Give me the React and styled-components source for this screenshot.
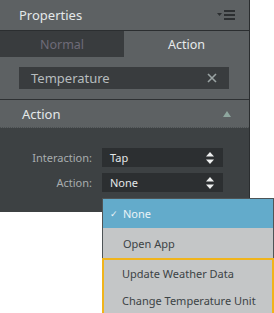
import React from "react";
import styled, { createGlobalStyle } from "styled-components";

const Global = createGlobalStyle`
  html, body { margin: 0; padding: 0; background: #ffffff; }
  body { font-family: "Noto Sans", "Open Sans", sans-serif; }
`;

const Stage = styled.div`
  position: relative;
  width: 274px;
  height: 313px;
  overflow: hidden;
  background: #ffffff;
`;

const Panel = styled.div`
  width: 249px;
  border-right: 1px solid #2a2d2f;
  display: flex;
  flex-direction: column;
  background: #5d6163;
`;

const Header = styled.div`
  height: 30px;
  border-bottom: 1px solid #2b2e30;
  display: flex;
  align-items: center;
  justify-content: space-between;
  padding: 0 12px 0 19px;
  color: #e4e8e9;
  font-size: 13px;
`;

const Tabs = styled.div`
  display: grid;
  grid-template-columns: 124px 1fr;
  height: 26px;
`;

const Tab = styled.div`
  display: flex;
  align-items: center;
  justify-content: center;
  font-size: 12.5px;
  background: ${(p) => (p.$active ? "#5d6163" : "#393c3e")};
  color: ${(p) => (p.$active ? "#e8ebec" : "#6e6b78")};
`;

const SearchArea = styled.div`
  padding: 10px 20px 10px 19px;
  border-bottom: 1px solid #2e3133;
`;

const SearchField = styled.div`
  height: 22px;
  background: #393c3e;
  display: flex;
  align-items: center;
  justify-content: space-between;
  padding: 0 12px 0 12px;
  color: #b7bcbe;
  font-size: 13px;
`;

const SectionHeader = styled.div`
  height: 27px;
  display: flex;
  align-items: center;
  justify-content: space-between;
  padding: 0 18px 0 22px;
  color: #e4e8e9;
  font-size: 13px;
  border-bottom: 1px dotted #4a4f51;
`;

const Body = styled.div`
  background: #3d4143;
  height: 84px;
  padding-top: 20px;
  box-sizing: border-box;
  display: flex;
  flex-direction: column;
  gap: 6px;
`;

const Row = styled.div`
  display: grid;
  grid-template-columns: 92px 121px;
  column-gap: 10px;
  align-items: center;
`;

const Label = styled.div`
  text-align: right;
  color: #a8adaf;
  font-size: 11px;
`;

const Select = styled.div`
  height: 19px;
  background: #2c2f31;
  display: flex;
  align-items: center;
  justify-content: space-between;
  padding: 0 9px 0 8px;
  color: #e4e8e9;
  font-size: 11px;
`;

const Menu = styled.div`
  position: absolute;
  left: 102px;
  top: 198px;
  width: 172px;
  box-sizing: border-box;
  border: 1px solid #4e5456;
  border-bottom: none;
  background: #c4c6c7;
  display: flex;
  flex-direction: column;
`;

const Item = styled.div`
  height: ${(p) => p.$h || 28}px;
  display: flex;
  align-items: center;
  padding-left: ${(p) => (p.$inset ? 18 : 20)}px;
  font-size: 11px;
  color: ${(p) => (p.$selected ? "#eaf3f7" : "#3c4345")};
  background: ${(p) => (p.$selected ? "#63abcb" : "transparent")};
  position: relative;
`;

const Check = styled.span`
  position: absolute;
  left: 7px;
  font-size: 9px;
  color: #eef4f7;
`;

const Highlight = styled.div`
  border: 2px solid #f0b41c;
  display: flex;
  flex-direction: column;
  margin-left: -1px;
  margin-right: -1px;
`;

const MenuIcon = () => (
  <svg width="20" height="12" viewBox="0 0 20 12">
    <polygon points="0,4 5,4 2.5,7" fill="#2c2f31" />
    <rect x="7" y="1" width="11" height="2" fill="#2c2f31" />
    <rect x="7" y="5" width="11" height="2" fill="#2c2f31" />
    <rect x="7" y="9" width="11" height="2" fill="#2c2f31" />
  </svg>
);

const Close = () => (
  <svg width="10" height="10" viewBox="0 0 10 10">
    <path d="M1 1 L9 9 M9 1 L1 9" stroke="#9aa3a3" strokeWidth="1.6" />
  </svg>
);

const Collapse = () => (
  <svg width="8" height="6" viewBox="0 0 8 6">
    <polygon points="4,0 8,6 0,6" fill="#8ea69e" />
  </svg>
);

const Stepper = () => (
  <svg width="8" height="12" viewBox="0 0 8 12">
    <polygon points="4,0 8,4.5 0,4.5" fill="#eef0f0" />
    <polygon points="4,12 8,7.5 0,7.5" fill="#eef0f0" />
  </svg>
);

export default function App() {
  return (
    <Stage>
      <Global />
      <Panel>
        <Header>
          <span>Properties</span>
          <MenuIcon />
        </Header>
        <Tabs>
          <Tab>Normal</Tab>
          <Tab $active>Action</Tab>
        </Tabs>
        <SearchArea>
          <SearchField>
            <span>Temperature</span>
            <Close />
          </SearchField>
        </SearchArea>
        <SectionHeader>
          <span>Action</span>
          <Collapse />
        </SectionHeader>
        <Body>
          <Row>
            <Label>Interaction:</Label>
            <Select>
              <span>Tap</span>
              <Stepper />
            </Select>
          </Row>
          <Row>
            <Label>Action:</Label>
            <Select>
              <span>None</span>
              <Stepper />
            </Select>
          </Row>
        </Body>
      </Panel>
      <Menu>
        <Item $selected $h={29}>
          <Check>✓</Check>
          None
        </Item>
        <Item $h={30}>Open App</Item>
        <Highlight>
          <Item $inset $h={27}>Update Weather Data</Item>
          <Item $inset $h={27}>Change Temperature Unit</Item>
        </Highlight>
      </Menu>
    </Stage>
  );
}
